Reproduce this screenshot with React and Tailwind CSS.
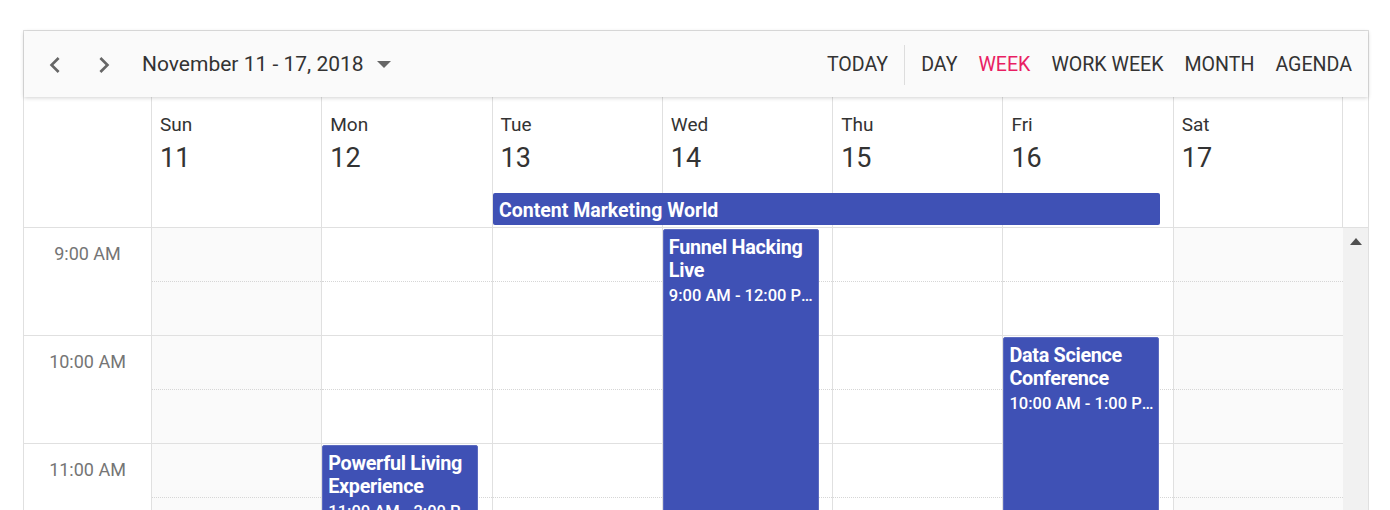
const days = [
  { name: "Sun", num: 11, weekend: true },
  { name: "Mon", num: 12 },
  { name: "Tue", num: 13 },
  { name: "Wed", num: 14 },
  { name: "Thu", num: 15 },
  { name: "Fri", num: 16 },
  { name: "Sat", num: 17, weekend: true },
];

const hours = ["9:00 AM", "10:00 AM", "11:00 AM", "12:00 PM", "1:00 PM"];

// events keyed by day index, start = hours from 9:00
const events = {
  1: [{ title: "Powerful Living Experience", time: "11:00 AM - 2:00 PM", start: 2, len: 3 }],
  3: [{ title: "Funnel Hacking Live", time: "9:00 AM - 12:00 PM", start: 0, len: 3 }],
  5: [{ title: "Data Science Conference", time: "10:00 AM - 1:00 PM", start: 1, len: 3 }],
};

function Chevron({ dir }) {
  return (
    <svg width="32" height="32" viewBox="0 0 24 24" fill="#666">
      {dir === "left" ? (
        <path d="M15.41 7.41L14 6l-6 6 6 6 1.41-1.41L10.83 12z" />
      ) : (
        <path d="M8.59 16.59L10 18l6-6-6-6-1.41 1.41L13.17 12z" />
      )}
    </svg>
  );
}

export default function App() {
  const views = ["DAY", "WEEK", "WORK WEEK", "MONTH", "AGENDA"];
  return (
    <div className="w-[1390px] h-[510px] overflow-hidden bg-white font-['Roboto',sans-serif]">
      <div className="ml-[23px] mt-[30px] w-[1346px] border border-[#e0e0e0]">
        {/* toolbar */}
        <div className="relative z-10 h-[66px] bg-[#fafafa] flex items-center pt-[2px] shadow-[0_1px_4px_rgba(0,0,0,0.18)] text-[#333]">
          <div className="flex items-center pl-[11px]">
            <button className="w-10 h-10 flex items-center justify-center">
              <Chevron dir="left" />
            </button>
            <button className="w-10 h-10 ml-[9px] flex items-center justify-center">
              <Chevron dir="right" />
            </button>
            <span className="ml-[18px] text-[21px]">November 11 - 17, 2018</span>
            <svg width="14" height="8" viewBox="0 0 14 8" className="ml-[13px]">
              <path d="M0 0h14L7 7z" fill="#666" />
            </svg>
          </div>
          <div className="ml-auto flex items-center pr-[16px] text-[19.6px]">
            <span>TODAY</span>
            <div className="w-px h-[40px] bg-[#ddd] ml-[16px] mr-[16px]" />
            <div className="flex gap-[21px]">
              {views.map((v) => (
                <span key={v} className={v === "WEEK" ? "text-[#e91e63]" : ""}>
                  {v}
                </span>
              ))}
            </div>
          </div>
        </div>

        {/* header */}
        <div className="relative grid grid-cols-[127px_repeat(7,minmax(0,1fr))_25px] h-[131px] border-b border-[#e0e0e0]">
          <div />
          {days.map((d, i) => (
            <div key={d.name} className={"border-l border-[#e0e0e0] pl-[8px] pt-[16px] text-[#333] " + (i === 6 ? "border-r" : "")}>
              <div className="text-[19px] leading-[24px]">{d.name}</div>
              <div className="text-[27px] leading-[34px] mt-[4px]">{d.num}</div>
            </div>
          ))}
          <div />
          <div className="absolute left-[469px] top-[96px] w-[667px] h-[32px] bg-[#3f51b5] rounded-[2px] text-white font-bold text-[19.5px] leading-[32px] pl-[6px] pt-[2px]">
            Content Marketing World
          </div>
        </div>

        {/* body */}
        <div className="grid grid-cols-[127px_repeat(7,minmax(0,1fr))_25px] h-[300px] overflow-hidden">
          <div>
            {hours.map((h) => (
              <div key={h} className="h-[108px] border-b border-[#e0e0e0] text-center text-[18px] text-[#757575] pt-[12px]">
                {h}
              </div>
            ))}
          </div>
          {days.map((d, i) => (
            <div key={d.name} className={"relative border-l border-[#e0e0e0] " + (d.weekend ? "bg-[#fafafa]" : "bg-white")}>
              {hours.map((h) => (
                <div key={h} className="h-[108px] border-b border-[#e0e0e0] flex flex-col">
                  <div className="h-[54px] border-b border-dotted border-[#d6d6d6]" />
                  <div className="flex-1" />
                </div>
              ))}
              {(events[i] || []).map((e) => (
                <div
                  key={e.title}
                  className="absolute left-0 w-[156px] bg-[#3f51b5] border border-[#5c6bc0] rounded-[2px] text-white px-[5px] pt-[6px]"
                  style={{ top: e.start * 108 + 1, height: e.len * 108 - 2 }}
                >
                  <div className="text-[19.8px] leading-[23px] font-bold tracking-[-0.3px]">{e.title}</div>
                  <div className="text-[16.5px] leading-[25px] pt-[1px] font-medium truncate">{e.time}</div>
                </div>
              ))}
            </div>
          ))}
          <div className="bg-[#f1f1f1] flex justify-center pt-[10px]">
            <svg width="12" height="7" viewBox="0 0 12 7">
              <path d="M0 7L6 0l6 7z" fill="#505050" />
            </svg>
          </div>
        </div>
      </div>
    </div>
  );
}
